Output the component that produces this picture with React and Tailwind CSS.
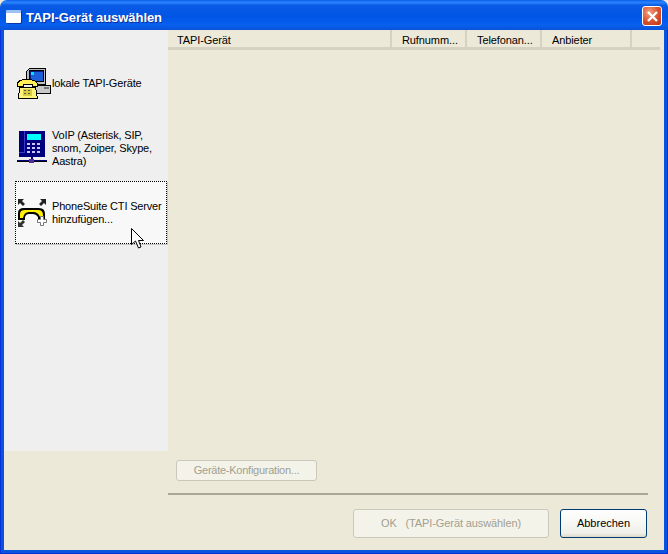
const ComputerPhoneIcon = () => (
  <svg width="34" height="32" viewBox="0 0 34 32" shapeRendering="crispEdges" className="shrink-0">
    <path d="M9.5 3.5 L12.5 0.5 H28.5 V16.5 H9.5 Z" fill="#c0c0c0" stroke="#000" />
    <rect x="12.5" y="2.5" width="14" height="11" fill="#08208c" stroke="#000" />
    <rect x="14" y="4" width="12" height="9" fill="#1c5fd8" />
    <rect x="14" y="4" width="3" height="3" fill="#00e0ff" />
    <path d="M18.5 17.5 H33.5 V25.5 H18.5 Z" fill="#c8c8c8" stroke="#000" />
    <rect x="27" y="19" width="5" height="2" fill="#777" />
    <path d="M2.5 19.5 H18.5 L20.5 30.5 H1.5 Z" fill="#fff27a" stroke="#000" />
    <path d="M0.5 16.5 Q0.5 11.5 9 11.5 Q20.5 11.5 20.5 16.5 V18.5 H15.5 V16.5 H6.5 V18.5 H0.5 Z" fill="#ffee55" stroke="#000" />
    <rect x="6" y="21" width="9" height="7" fill="#d8cc40" />
    <rect x="7" y="22" width="2" height="1" fill="#555" />
    <rect x="11" y="22" width="2" height="1" fill="#555" />
    <rect x="7" y="25" width="2" height="1" fill="#555" />
    <rect x="11" y="25" width="2" height="1" fill="#555" />
  </svg>
)

const VoipIcon = () => (
  <svg width="30" height="36" viewBox="0 0 30 36" shapeRendering="crispEdges" className="shrink-0">
    <rect x="2" y="1" width="26" height="26" fill="#00007f" />
    <rect x="7" y="1" width="1" height="21" fill="#3a3ac8" />
    <rect x="2" y="22" width="6" height="1" fill="#3a3ac8" />
    <rect x="10" y="4" width="14" height="6" fill="#00ffff" />
    <rect x="10" y="13" width="3" height="2" fill="#c8c8ff" />
    <rect x="15" y="13" width="3" height="2" fill="#c8c8ff" />
    <rect x="20" y="13" width="3" height="2" fill="#c8c8ff" />
    <rect x="10" y="17" width="3" height="2" fill="#c8c8ff" />
    <rect x="15" y="17" width="3" height="2" fill="#c8c8ff" />
    <rect x="20" y="17" width="3" height="2" fill="#c8c8ff" />
    <rect x="10" y="21" width="3" height="2" fill="#c8c8ff" />
    <rect x="15" y="21" width="3" height="2" fill="#c8c8ff" />
    <rect x="20" y="21" width="3" height="2" fill="#c8c8ff" />
    <rect x="14" y="27" width="2" height="3" fill="#00007f" />
    <rect x="0" y="30" width="30" height="1" fill="#00007f" />
    <rect x="0" y="31" width="30" height="1" fill="#000" />
    <rect x="12" y="29" width="5" height="4" fill="#5a2a9c" />
  </svg>
)

const AddServerIcon = () => (
  <svg width="30" height="30" viewBox="0 0 30 30" className="shrink-0">
    <path d="M1 1 H7 L5 3 L8 6 L6 8 L3 5 L1 7 Z" fill="#222" />
    <path d="M29 1 H23 L25 3 L22 6 L24 8 L27 5 L29 7 Z" fill="#222" />
    <path d="M1 29 H7 L5 27 L8 24 L6 22 L3 25 L1 23 Z" fill="#333" />
    <path d="M1 22 V15 Q1 10 7 10 H22 Q28 10 28 16 V21 H21 V19 Q19 16 16 16 H12 Q9 16 8 19 V22 Z" fill="#000" />
    <path d="M3 20 V16 Q3 12 8 12 H21 Q26 12 26 17 V19 H23 Q21 14 16 14 H12 Q7 14 6 20 Z" fill="#ffef00" />
    <path d="M23.5 18.5 H26.5 V21.5 H29.5 V24.5 H26.5 V27.5 H23.5 V24.5 H20.5 V21.5 H23.5 Z" fill="#fff" stroke="#777" />
  </svg>
)

const Cursor = () => (
  <svg width="14" height="21" viewBox="0 0 14 21" className="absolute left-[131px] top-[228px]">
    <path d="M0.5 0.5 V16.5 L4.5 13 L7.5 20 L10 19 L7.5 12.5 L12.5 12.5 Z" fill="#fff" stroke="#000" />
  </svg>
)

const SideItem = ({ icon, lines, selected, textClass = '' }) => (
  <div
    className={`flex h-[63px] items-center pl-[1px] ${
      selected ? 'border border-dotted border-black bg-[#f8f8f8] shadow-[1px_1px_0_#c8c8c8]' : 'border border-transparent'
    }`}
  >
    <div className="w-[35px] shrink-0">{icon}</div>
    <div className={`text-[11px] leading-[13px] tracking-[-0.17px] text-black ${textClass}`}>
      {lines.map((line) => (
        <div key={line} className="whitespace-nowrap">{line}</div>
      ))}
    </div>
  </div>
)

const columns = [
  { label: 'TAPI-Gerät', width: 'w-[224px]', pad: 'pl-[9px]' },
  { label: 'Rufnumm...', width: 'w-[75px]', pad: 'pl-[10px]' },
  { label: 'Telefonan...', width: 'w-[75px]', pad: 'pl-[10px]' },
  { label: 'Anbieter', width: 'w-[90px]', pad: 'pl-[10px]' },
]

const App = () => {
  return (
    <div className="relative flex h-[554px] w-[668px] flex-col overflow-hidden bg-[#ece9d8] font-['Liberation_Sans',Arial,sans-serif] text-[11px]">
      {/* title bar */}
      <div className="flex h-[30px] shrink-0 items-center rounded-t-[7px] bg-[linear-gradient(180deg,#0a5fe8_0%,#2a84ff_8%,#0a5be4_18%,#0055e5_55%,#0860f0_82%,#0a52d8_100%)] pl-[6px] pr-[6px] pt-[2px]">
        <div className="h-[13px] w-[15px] rounded-[1px] border-t-[3px] border-[#9dc0f5] bg-white shadow-[1px_1px_0_#0a3aa0]"></div>
        <div className="ml-[5px] pt-[4px] text-[13px] font-bold tracking-[-0.05px] text-white [text-shadow:1px_1px_0_#0a2f9c]">TAPI-Gerät auswählen</div>
        <div className="ml-auto flex h-[20px] w-[20px] items-center justify-center rounded-[3px] border border-white bg-[radial-gradient(circle_at_35%_30%,#f0a080,#d9502c_55%,#b83a18)]">
          <svg width="13" height="13" viewBox="0 0 13 13">
            <path d="M2 2 L11 11 M11 2 L2 11" stroke="#fff" strokeWidth="2.4" />
          </svg>
        </div>
      </div>

      {/* window body */}
      <div className="flex min-h-0 flex-1 border-x border-b border-[#0831d9]">
        <div className="flex min-h-0 flex-1 border-x-[3px] border-b-[3px] border-[#0855dd]">
          <div className="flex h-[421px] w-[164px] shrink-0 flex-col gap-px bg-[#efefef] pl-[11px] pr-[1px] pt-[22px]">
            <SideItem icon={<ComputerPhoneIcon />} lines={['lokale TAPI-Geräte']} />
            <SideItem icon={<VoipIcon />} textClass="pt-[2px]" lines={['VoIP (Asterisk, SIP,', 'snom, Zoiper, Skype,', 'Aastra)']} />
            <div className="mt-px">
              <SideItem selected icon={<AddServerIcon />} lines={['PhoneSuite CTI Server', 'hinzufügen...']} />
            </div>
          </div>

          <div className="flex min-w-0 flex-1 flex-col">
            <div className="flex h-[20px] w-[492px] shrink-0 border-b-[3px] border-[#d6d2c2]">
              {columns.map((col) => (
                <div key={col.label} className={`${col.width} ${col.pad} flex items-center border-r-2 border-[#d6d2c2] pt-[3px] tracking-[-0.1px] text-black`}>
                  {col.label}
                </div>
              ))}
            </div>

            <div className="flex-1"></div>

            <div className="ml-[8px] flex h-[21px] w-[141px] items-center justify-center rounded-[3px] border border-[#cac8bb] bg-[#f4f3ea] tracking-[-0.25px] text-[#a19f8f]">
              Geräte-Konfiguration...
            </div>
            <div className="mt-[12px] h-[2px] w-[480px] bg-[#aca899]"></div>
            <div className="mt-[14px] mb-[12px] flex w-[479px] justify-end gap-[11px]">
              <div className="flex h-[29px] w-[196px] items-center justify-center rounded-[3px] border border-[#cac8bb] bg-[#f4f3ea] tracking-[-0.1px] text-[#a19f8f]">
                OK&nbsp;&nbsp;&nbsp;(TAPI-Gerät auswählen)
              </div>
              <div className="flex h-[29px] w-[87px] items-center justify-center rounded-[3px] border border-[#003c74] bg-[linear-gradient(180deg,#ffffff,#f0f0ea_85%,#dcd8c8)] text-black">
                Abbrechen
              </div>
            </div>
          </div>
        </div>
      </div>

      <Cursor />
    </div>
  )
}

export default App
